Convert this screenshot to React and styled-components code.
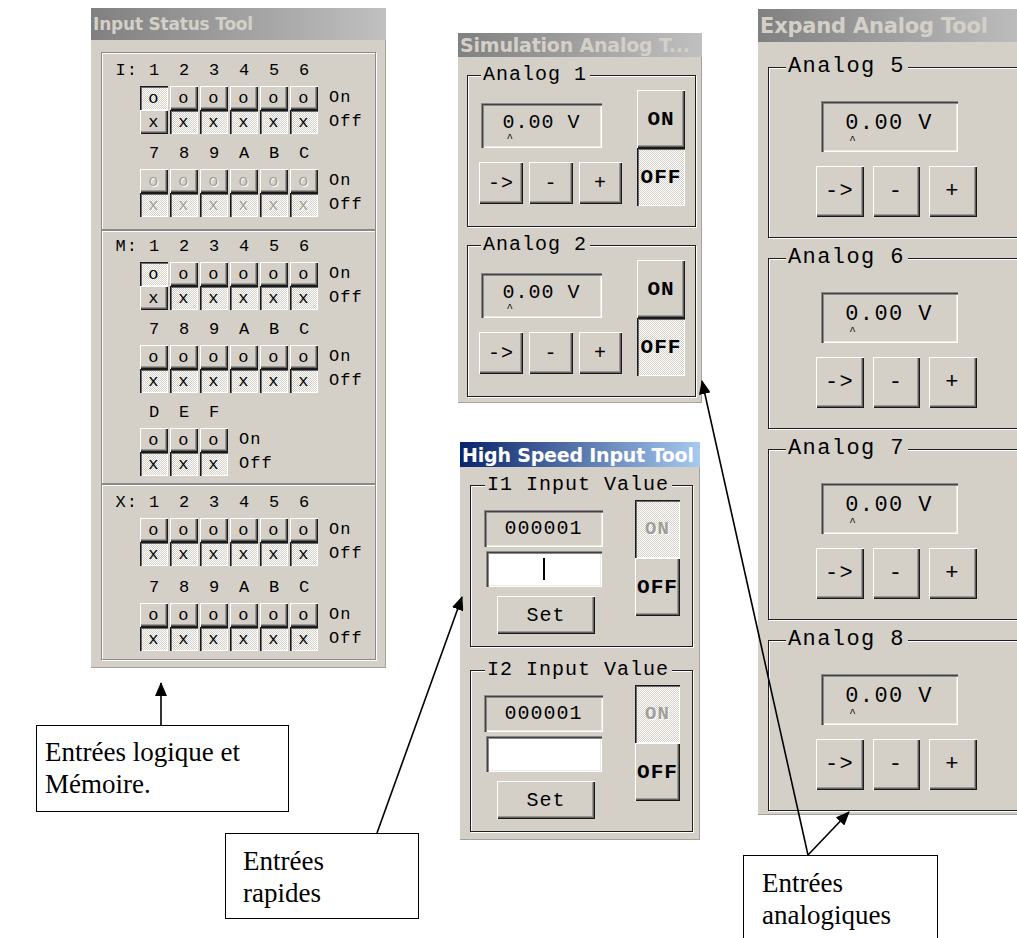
import React from "react";
import styled, { createGlobalStyle, css } from "styled-components";

const FACE = "#d4d0c8";
const MONO = `"Liberation Mono", "Courier New", monospace`;
const SANS = `"DejaVu Sans", Verdana, sans-serif`;
const SERIF = `"Liberation Serif", "Times New Roman", serif`;

const GlobalStyle = createGlobalStyle`
  html, body {
    margin: 0;
    padding: 0;
    background: #ffffff;
  }
  #root {
    width: 1017px;
    height: 938px;
  }
`;

const Page = styled.div`
  position: relative;
  width: 1017px;
  height: 938px;
  overflow: hidden;
  background: #ffffff;
`;

/* ---------- window chrome ---------- */

const Window = styled.section`
  position: absolute;
  left: ${p => p.$x}px;
  top: ${p => p.$y}px;
  width: ${p => p.$w}px;
  height: ${p => p.$h}px;
  display: flex;
  flex-direction: column;
  background: ${FACE};
  box-shadow: inset -1px -1px 0 #a5a29b;
`;

const TitleBar = styled.header`
  flex: none;
  height: ${p => p.$h}px;
  display: flex;
  align-items: center;
  padding-left: 2px;
  overflow: hidden;
  white-space: nowrap;
  font-family: ${SANS};
  font-weight: bold;
  font-size: ${p => p.$size}px;
  letter-spacing: -0.2px;
  color: ${p => (p.$active ? "#ffffff" : "#d4d0c8")};
  background: ${p =>
    p.$active
      ? "linear-gradient(90deg, #0a246a 0%, #a6caf0 100%)"
      : "linear-gradient(90deg, #808080 0%, #c0c0c0 100%)"};
`;

const Body = styled.div`
  flex: 1;
  display: flex;
  flex-direction: column;
  gap: ${p => p.$gap || 0}px;
  padding: ${p => p.$pad};
  font-family: ${MONO};
  font-size: ${p => p.$fs}px;
  letter-spacing: ${p => p.$ls}px;
  color: #000;
`;

/* ---------- controls ---------- */

const raised = css`
  background: ${FACE};
  box-shadow: inset 1px 1px 0 #ffffff, inset -1px -1px 0 #1a1a1a,
    inset -2px -2px 0 #5e5e5e, inset -3px -3px 0 #9c9a94;
`;

const pressed = css`
  background: repeating-conic-gradient(#d4d0c8 0 25%, #ffffff 0 50%) 0 0 / 2px 2px;
  box-shadow: inset 1px 1px 0 #1a1a1a, inset 2px 2px 0 #6a6a6a,
    inset -1px -1px 0 #ffffff;
`;

const PushButton = styled.button`
  appearance: none;
  box-sizing: border-box;
  flex: none;
  width: ${p => p.$w}px;
  height: ${p => p.$h}px;
  margin: 0;
  padding: 0;
  border: none;
  display: flex;
  align-items: center;
  justify-content: center;
  font-family: inherit;
  font-size: ${p => (p.$fs ? `${p.$fs}px` : "inherit")};
  letter-spacing: inherit;
  font-weight: ${p => (p.$bold ? "bold" : "normal")};
  color: ${p => (p.$dim ? "#a19e97" : "#000")};
  text-shadow: ${p => (p.$dim ? "1px 1px 0 #ffffff" : "none")};
  ${p => (p.$down ? pressed : raised)}
`;

const Field = styled.div`
  box-sizing: border-box;
  flex: none;
  width: ${p => p.$w}px;
  height: ${p => p.$h}px;
  margin-left: ${p => p.$ml || 0}px;
  display: flex;
  flex-direction: column;
  align-items: center;
  justify-content: center;
  background: ${p => (p.$white ? "#ffffff" : FACE)};
  box-shadow: inset 1px 1px 0 #8a8a8a, inset 2px 2px 0 #404040,
    inset 3px 3px 0 #8a8a8a, inset -1px -1px 0 #ffffff, inset -2px -2px 0 #ece9e2;
`;

const Volt = styled.div`
  display: flex;
  flex-direction: column;
  align-items: flex-start;
  line-height: 1;
  padding-top: 4px;
`;

const Cursor = styled.span`
  font-size: 11px;
  line-height: 9px;
  margin-left: 4px;
  margin-top: 1px;
`;

const TextCaret = styled.span`
  width: 2px;
  height: 22px;
  background: #000;
`;

/* ---------- group boxes ---------- */

const GroupBox = styled.div`
  position: relative;
  flex: none;
  box-sizing: border-box;
  width: ${p => p.$w}px;
  height: ${p => p.$h}px;
  border: 1px solid #1e1e1e;
  box-shadow: inset 1px 1px 0 #ffffff, 1px 1px 0 #ffffff;
`;

const Legend = styled.span`
  position: absolute;
  top: -1px;
  left: ${p => p.$left}px;
  transform: translateY(-52%);
  padding: 0 3px 0 2px;
  background: ${FACE};
  line-height: 1;
  white-space: nowrap;
`;

const Row = styled.div`
  display: flex;
  gap: ${p => p.$gap}px;
`;

const Column = styled.div`
  display: flex;
  flex-direction: column;
  align-items: flex-start;
  gap: ${p => p.$gap || 0}px;
  margin-top: ${p => p.$mt || 0}px;
`;

const SplitBody = styled.div`
  display: flex;
  justify-content: space-between;
  padding: ${p => p.$pad};
`;

const CenterBody = styled.div`
  display: flex;
  justify-content: center;
  padding-top: ${p => p.$pt}px;
`;

/* ---------- input status ---------- */

const IOPanel = styled.div`
  flex: none;
  box-sizing: border-box;
  height: ${p => p.$h}px;
  padding: ${p => p.$pt}px 0 0 0;
  display: flex;
  flex-direction: column;
  gap: ${p => p.$gap}px;
  border: 1px solid #8a8a8a;
  box-shadow: inset 1px 1px 0 #ffffff, 1px 1px 0 #ffffff;
`;

const IOGrid = styled.div`
  display: grid;
  grid-template-columns: 36px repeat(${p => p.$n}, 28px) auto;
  grid-template-rows: 24px 24px 24px;
  column-gap: 2px;
`;

const Prefix = styled.span`
  text-align: right;
  line-height: 18px;
`;

const Head = styled.span`
  text-align: center;
  line-height: 18px;
  letter-spacing: 0;
`;

const StateLabel = styled.span`
  padding-left: 9px;
  line-height: 24px;
`;

/* ---------- callouts ---------- */

const Callout = styled.div`
  position: absolute;
  left: ${p => p.$x}px;
  top: ${p => p.$y}px;
  width: ${p => p.$w}px;
  height: ${p => p.$h}px;
  box-sizing: border-box;
  padding: ${p => p.$pad};
  border: 1.5px solid #000;
  background: #ffffff;
  font-family: ${SERIF};
  font-size: 27px;
  line-height: 32px;
  color: #000;
`;

const Arrows = styled.svg`
  position: absolute;
  left: 0;
  top: 0;
  width: 1017px;
  height: 938px;
  pointer-events: none;
`;

/* ---------- pieces ---------- */

const ioPanels = [
  {
    h: 178, pt: 9, gap: 11,
    blocks: [
      { prefix: "I:", heads: ["1", "2", "3", "4", "5", "6"], firstOn: true },
      { heads: ["7", "8", "9", "A", "B", "C"], dim: true },
    ],
  },
  {
    h: 254, pt: 7, gap: 11,
    blocks: [
      { prefix: "M:", heads: ["1", "2", "3", "4", "5", "6"], firstOn: true },
      { heads: ["7", "8", "9", "A", "B", "C"] },
      { heads: ["D", "E", "F"] },
    ],
  },
  {
    h: 176, pt: 9, gap: 13,
    blocks: [
      { prefix: "X:", heads: ["1", "2", "3", "4", "5", "6"] },
      { heads: ["7", "8", "9", "A", "B", "C"] },
    ],
  },
];

function IOBlock({ prefix, heads, firstOn, dim }) {
  const n = heads.length;
  return (
    <IOGrid $n={n}>
      <Prefix>{prefix || ""}</Prefix>
      {heads.map(h => (
        <Head key={h}>{h}</Head>
      ))}
      <span />
      <span />
      {heads.map((h, i) => (
        <PushButton key={h} $w={28} $h={24} $dim={dim} $down={firstOn && i === 0}>
          o
        </PushButton>
      ))}
      <StateLabel>On</StateLabel>
      <span />
      {heads.map((h, i) => (
        <PushButton key={h} $w={28} $h={24} $dim={dim} $down={!(firstOn && i === 0)}>
          x
        </PushButton>
      ))}
      <StateLabel>Off</StateLabel>
    </IOGrid>
  );
}

function VoltReadout({ w, h, ml }) {
  return (
    <Field $w={w} $h={h} $ml={ml}>
      <Volt>
        <span>0.00 V</span>
        <Cursor>^</Cursor>
      </Volt>
    </Field>
  );
}

function SimAnalog({ n }) {
  return (
    <GroupBox $w={229} $h={152}>
      <Legend $left={13}>Analog {n}</Legend>
      <SplitBody $pad="14px 10px 0 11px">
        <Column $gap={14} $mt={13}>
          <VoltReadout w={121} h={45} ml={2} />
          <Row $gap={6}>
            <PushButton $w={44} $h={42}>-&gt;</PushButton>
            <PushButton $w={44} $h={42}>-</PushButton>
            <PushButton $w={43} $h={42}>+</PushButton>
          </Row>
        </Column>
        <Column>
          <PushButton $w={48} $h={58} $bold $fs={21}>ON</PushButton>
          <PushButton $w={48} $h={58} $bold $fs={21} $down>OFF</PushButton>
        </Column>
      </SplitBody>
    </GroupBox>
  );
}

function SpeedInput({ n, caret }) {
  return (
    <GroupBox $w={223} $h={162}>
      <Legend $left={14}>I{n} Input Value</Legend>
      <SplitBody $pad="14px 12px 0 13px">
        <Column $mt={10}>
          <Field $w={119} $h={37}>000001</Field>
          <Field $w={116} $h={36} $ml={2} $white style={{ marginTop: 4 }}>
            {caret && <TextCaret />}
          </Field>
          <PushButton $w={98} $h={38} style={{ marginLeft: 13, marginTop: 9 }}>
            Set
          </PushButton>
        </Column>
        <Column>
          <PushButton $w={45} $h={58} $bold $fs={19} $down $dim>ON</PushButton>
          <PushButton $w={45} $h={58} $bold $fs={21}>OFF</PushButton>
        </Column>
      </SplitBody>
    </GroupBox>
  );
}

function ExpandAnalog({ n }) {
  return (
    <GroupBox $w={256} $h={171}>
      <Legend $left={17}>Analog {n}</Legend>
      <CenterBody $pt={33}>
        <Column $gap={14}>
          <VoltReadout w={137} h={51} ml={5} />
          <Row $gap={9}>
            <PushButton $w={48} $h={51}>-&gt;</PushButton>
            <PushButton $w={47} $h={51}>-</PushButton>
            <PushButton $w={48} $h={51}>+</PushButton>
          </Row>
        </Column>
      </CenterBody>
    </GroupBox>
  );
}

export default function App() {
  return (
    <Page>
      <GlobalStyle />

      <Window $x={91} $y={8} $w={295} $h={660}>
        <TitleBar $h={32} $size={17}>Input Status Tool</TitleBar>
        <Body $pad="12px 10px 8px 10px" $fs={17} $ls={1.1}>
          {ioPanels.map((p, i) => (
            <IOPanel key={i} $h={p.h} $pt={p.pt} $gap={p.gap}>
              {p.blocks.map((b, j) => (
                <IOBlock key={j} {...b} />
              ))}
            </IOPanel>
          ))}
        </Body>
      </Window>

      <Window $x={458} $y={33} $w={244} $h={370}>
        <TitleBar $h={24} $size={19}>Simulation Analog T...</TitleBar>
        <Body $pad="18px 6px 0 9px" $gap={18} $fs={20} $ls={1}>
          <SimAnalog n={1} />
          <SimAnalog n={2} />
        </Body>
      </Window>

      <Window $x={460} $y={442} $w={240} $h={398}>
        <TitleBar $h={25} $size={19} $active>High Speed Input Tool</TitleBar>
        <Body $pad="18px 7px 0 10px" $gap={23} $fs={20} $ls={1}>
          <SpeedInput n={1} caret />
          <SpeedInput n={2} />
        </Body>
      </Window>

      <Window $x={758} $y={9} $w={276} $h={806}>
        <TitleBar $h={33} $size={21}>Expand Analog Tool</TitleBar>
        <Body $pad="25px 10px 0 10px" $gap={20} $fs={22} $ls={1.4}>
          <ExpandAnalog n={5} />
          <ExpandAnalog n={6} />
          <ExpandAnalog n={7} />
          <ExpandAnalog n={8} />
        </Body>
      </Window>

      <Callout $x={36} $y={725} $w={253} $h={87} $pad="10px 0 0 8px">
        Entrées logique et
        <br />
        Mémoire.
      </Callout>

      <Callout $x={225} $y={833} $w={194} $h={86} $pad="11px 0 0 17px">
        Entrées
        <br />
        rapides
      </Callout>

      <Callout $x={743} $y={855} $w={195} $h={120} $pad="11px 0 0 18px">
        Entrées
        <br />
        analogiques
      </Callout>

      <Arrows viewBox="0 0 1017 938">
        <defs>
          <marker
            id="head"
            viewBox="0 0 14 12"
            refX="13"
            refY="6"
            markerWidth="14"
            markerHeight="12"
            markerUnits="userSpaceOnUse"
            orient="auto"
          >
            <path d="M0,0 L14,6 L0,12 Z" fill="#000" />
          </marker>
        </defs>
        <g stroke="#000" strokeWidth="1.6" fill="none">
          <line x1="161" y1="725" x2="161" y2="683" markerEnd="url(#head)" />
          <line x1="377" y1="833" x2="462" y2="597" markerEnd="url(#head)" />
          <line x1="808" y1="855" x2="702" y2="381" markerEnd="url(#head)" />
          <line x1="808" y1="855" x2="849" y2="812" markerEnd="url(#head)" />
        </g>
      </Arrows>
    </Page>
  );
}
